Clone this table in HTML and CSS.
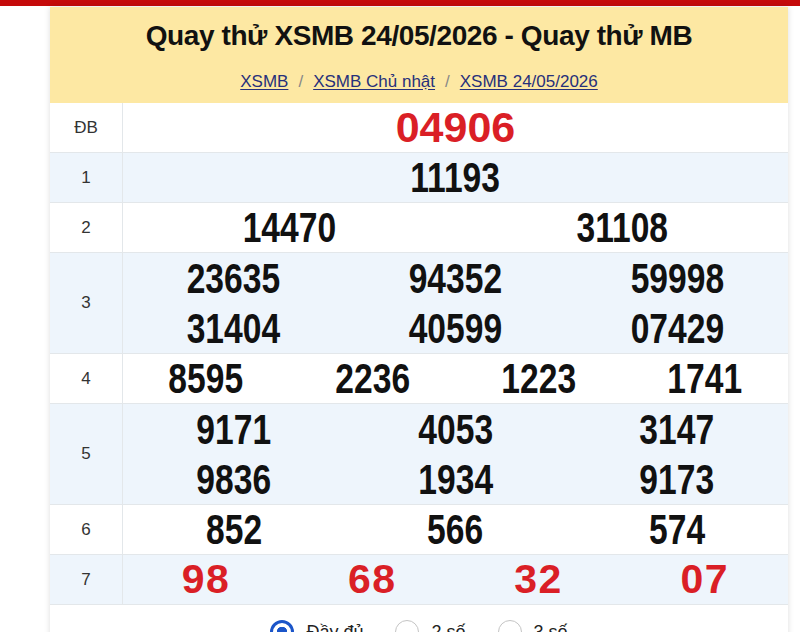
FILE: index.html
```html
<!DOCTYPE html>
<html lang="vi">
<head>
<meta charset="utf-8">
<title>Quay thử XSMB 24/05/2026</title>
<link rel="stylesheet" href="styles.css">
</head>
<body>
<div class="topbar"></div>
<main class="wrap">
  <section class="card">
    <header class="head">
      <h1 class="title">Quay thử XSMB 24/05/2026 - Quay thử MB</h1>
      <nav class="crumbs">
        <a href="#">XSMB</a><span class="sep">/</span><a href="#">XSMB Chủ nhật</a><span class="sep">/</span><a href="#">XSMB 24/05/2026</a>
      </nav>
    </header>

    <div class="table">
      <div class="row">
        <div class="label">ĐB</div>
        <div class="nums c1"><span class="cell"><span class="n db">04906</span></span></div>
      </div>
      <div class="row alt">
        <div class="label">1</div>
        <div class="nums c1"><span class="cell"><span class="n">11193</span></span></div>
      </div>
      <div class="row">
        <div class="label">2</div>
        <div class="nums c2"><span class="cell"><span class="n">14470</span></span><span class="cell"><span class="n">31108</span></span></div>
      </div>
      <div class="row alt two">
        <div class="label">3</div>
        <div class="nums c3">
          <span class="cell"><span class="n">23635</span></span><span class="cell"><span class="n">94352</span></span><span class="cell"><span class="n">59998</span></span>
          <span class="cell"><span class="n">31404</span></span><span class="cell"><span class="n">40599</span></span><span class="cell"><span class="n">07429</span></span>
        </div>
      </div>
      <div class="row">
        <div class="label">4</div>
        <div class="nums c4"><span class="cell"><span class="n">8595</span></span><span class="cell"><span class="n">2236</span></span><span class="cell"><span class="n">1223</span></span><span class="cell"><span class="n">1741</span></span></div>
      </div>
      <div class="row alt two">
        <div class="label">5</div>
        <div class="nums c3">
          <span class="cell"><span class="n">9171</span></span><span class="cell"><span class="n">4053</span></span><span class="cell"><span class="n">3147</span></span>
          <span class="cell"><span class="n">9836</span></span><span class="cell"><span class="n">1934</span></span><span class="cell"><span class="n">9173</span></span>
        </div>
      </div>
      <div class="row">
        <div class="label">6</div>
        <div class="nums c3"><span class="cell"><span class="n">852</span></span><span class="cell"><span class="n">566</span></span><span class="cell"><span class="n">574</span></span></div>
      </div>
      <div class="row alt">
        <div class="label">7</div>
        <div class="nums c4"><span class="cell"><span class="n red">98</span></span><span class="cell"><span class="n red">68</span></span><span class="cell"><span class="n red">32</span></span><span class="cell"><span class="n red">07</span></span></div>
      </div>
    </div>

    <div class="opts">
      <label class="opt"><span class="radio on"></span><span>Đầy đủ</span></label>
      <label class="opt"><span class="radio"></span><span>2 số</span></label>
      <label class="opt"><span class="radio"></span><span>3 số</span></label>
    </div>
  </section>
</main>
</body>
</html>
```

FILE: styles.css
```css
* { box-sizing: border-box; }
html, body { margin: 0; padding: 0; background: #fff; }
body {
  font-family: "Liberation Sans", Arial, sans-serif;
  color: #111;
  overflow: hidden;
}
.topbar {
  height: 6px;
  background: #c50a0a;
}
.wrap {
  padding: 1px 0 0 50px;
}
.card {
  width: 738px;
  background: #fff;
  box-shadow: 0 0 6px rgba(0, 0, 0, 0.14);
}
.head {
  background: #fde8a3;
  padding: 12px 0 9px;
  text-align: center;
}
.title {
  margin: 0;
  font-size: 28px;
  line-height: 34px;
  font-weight: bold;
  letter-spacing: -0.4px;
  color: #111;
}
.crumbs {
  margin-top: 17px;
  font-size: 17px;
  line-height: 24px;
}
.crumbs a {
  color: #27307a;
  text-decoration: underline;
  text-underline-offset: 2px;
}
.sep {
  color: #888;
  margin: 0 10px;
}
.row {
  display: grid;
  grid-template-columns: 73px 1fr;
  border-bottom: 1px solid #e3e7ea;
}
.row.alt { background: #eef5fc; }
.label {
  display: flex;
  align-items: center;
  justify-content: center;
  border-right: 1px solid #e3e7ea;
  font-size: 17px;
  color: #333;
}
.nums { display: grid; }
.c1 { grid-template-columns: 1fr; }
.c2 { grid-template-columns: repeat(2, 1fr); }
.c3 { grid-template-columns: repeat(3, 1fr); }
.c4 { grid-template-columns: repeat(4, 1fr); }
.cell {
  display: flex;
  justify-content: center;
  align-items: center;
  height: 49px;
}
.two .cell { height: 50px; }
.n {
  display: inline-block;
  font-size: 42px;
  font-weight: bold;
  line-height: 49px;
  color: #111;
  transform: scaleX(0.8);
}
.n.db {
  font-size: 43px;
  transform: none;
  color: #da1f26;
}
.n.red {
  font-size: 41px;
  letter-spacing: 1.5px;
  transform: none;
  color: #da1f26;
}
.opts {
  display: flex;
  justify-content: center;
  gap: 32px;
  padding: 15px 0 14px;
  font-size: 18px;
  color: #222;
}
.opt {
  display: flex;
  align-items: center;
  gap: 12px;
}
.radio {
  width: 24px;
  height: 24px;
  border-radius: 50%;
  border: 1px solid #c4c4c4;
  background: #fff;
}
.radio.on {
  border: 3px solid #1b55c9;
  background: radial-gradient(circle, #1b55c9 0 5px, #fff 5.5px);
}
```
